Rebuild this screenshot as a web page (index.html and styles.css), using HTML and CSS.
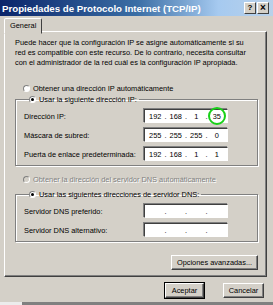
FILE: index.html
```html
<!DOCTYPE html>
<html lang="es">
<head>
    <meta charset="UTF-8"/>
    <meta name="viewport" content="width=device-width, initial-scale=1.0"/>
    <title>Propiedades de Protocolo Internet (TCP/IP)</title>
    <link rel="stylesheet" href="styles.css">
</head>
<body>
<div class="window">
    <div class="titlebar">
        <span class="title">Propiedades de Protocolo Internet (TCP/IP)</span>
        <div class="title-buttons">
            <span class="tbtn">?</span>
            <span class="tbtn close">×</span>
        </div>
    </div>

    <div class="main">
        <div class="tabs"><span class="tab">General</span></div>
        <div class="panel">
            <p class="intro">Puede hacer que la configuración IP se asigne automáticamente si su<br>
                red es compatible con este recurso. De lo contrario, necesita consultar<br>
                con el administrador de la red cuál es la configuración IP apropiada.</p>

            <!-- IP -->
            <label class="radio first"><span class="dot"></span>Obtener una dirección IP automáticamente</label>
            <fieldset class="group">
                <legend><label class="radio"><span class="dot on"></span>Usar la siguiente dirección IP:</label></legend>
                <div class="row">
                    <span class="label">Dirección IP:</span>
                    <div class="ip">
                        <span class="seg">192</span><span class="sep">.</span>
                        <span class="seg">168</span><span class="sep">.</span>
                        <span class="seg">1</span><span class="sep">.</span>
                        <span class="seg mark">35</span>
                    </div>
                </div>
                <div class="row">
                    <span class="label">Máscara de subred:</span>
                    <div class="ip">
                        <span class="seg">255</span><span class="sep">.</span>
                        <span class="seg">255</span><span class="sep">.</span>
                        <span class="seg">255</span><span class="sep">.</span>
                        <span class="seg">0</span>
                    </div>
                </div>
                <div class="row">
                    <span class="label">Puerta de enlace predeterminada:</span>
                    <div class="ip">
                        <span class="seg">192</span><span class="sep">.</span>
                        <span class="seg">168</span><span class="sep">.</span>
                        <span class="seg">1</span><span class="sep">.</span>
                        <span class="seg">1</span>
                    </div>
                </div>
            </fieldset>

            <!-- DNS -->
            <label class="radio second disabled"><span class="dot"></span>Obtener la dirección del servidor DNS automáticamente</label>
            <fieldset class="group dns">
                <legend><label class="radio"><span class="dot on"></span>Usar las siguientes direcciones de servidor DNS:</label></legend>
                <div class="row">
                    <span class="label">Servidor DNS preferido:</span>
                    <div class="ip">
                        <span class="seg"></span><span class="sep">.</span>
                        <span class="seg"></span><span class="sep">.</span>
                        <span class="seg"></span><span class="sep">.</span>
                        <span class="seg"></span>
                    </div>
                </div>
                <div class="row">
                    <span class="label">Servidor DNS alternativo:</span>
                    <div class="ip">
                        <span class="seg"></span><span class="sep">.</span>
                        <span class="seg"></span><span class="sep">.</span>
                        <span class="seg"></span><span class="sep">.</span>
                        <span class="seg"></span>
                    </div>
                </div>
            </fieldset>

            <div class="panel-actions">
                <button class="btn advanced">Opciones avanzadas...</button>
            </div>
        </div>

        <div class="dialog-actions">
            <button class="btn default">Aceptar</button>
            <button class="btn cancel">Cancelar</button>
        </div>
    </div>
    <div class="bottom"><span class="bottom-left"></span></div>
</div>
</body>
</html>
```

FILE: styles.css
```css
body {
    margin: 0;
    background-color: #d4d0c8;
    font-family: "Liberation Sans", Arial, sans-serif;
    font-size: 7.4px;
    color: #000;
}

.window {
    width: 273px;
    height: 305px;
    overflow: hidden;
    display: flex;
    flex-direction: column;
}

/* barra de titulo */
.titlebar {
    height: 16px;
    display: flex;
    align-items: center;
    justify-content: space-between;
    padding: 0 4px 0 2px;
    background: linear-gradient(to right, #0a246a 0%, #3a6ea5 50%, #a6caf0 80%, #b9d1ea 100%);
}

.title {
    color: #fff;
    font-weight: bold;
    font-size: 9.7px;
}

.title-buttons {
    display: flex;
    gap: 1px;
}

.tbtn {
    width: 10px;
    height: 10px;
    line-height: 10px;
    text-align: center;
    font-weight: bold;
    font-size: 8px;
    background-color: #d4d0c8;
    border: 1px solid;
    border-color: #fff #404040 #404040 #fff;
}

.tbtn.close {
    font-size: 10px;
}

.main {
    padding: 2px 6px 0 4px;
    flex: 1;
}

/* pestaña */
.tabs {
    display: flex;
    height: 13px;
}

.tab {
    position: relative;
    z-index: 1;
    height: 14px;
    padding: 0 5px;
    line-height: 13px;
    background-color: #d4d0c8;
    border: 1px solid;
    border-color: #fff #404040 transparent #fff;
    border-radius: 2px 2px 0 0;
}

.panel {
    height: 238px;
    padding: 6px 8px 0 10px;
    border: 1px solid;
    border-color: #fff #404040 #404040 #fff;
    box-shadow: inset -1px -1px #808080;
}

.intro {
    margin: 0;
    line-height: 10px;
    white-space: nowrap;
}

/* botones de radio */
.radio {
    display: flex;
    align-items: center;
    height: 10px;
    gap: 3px;
}

.radio.first {
    margin: 15px 0 0 8px;
}

.radio.second {
    margin: 8px 0 0 8px;
}

.radio.disabled {
    color: #808080;
    text-shadow: 1px 1px #fff;
}

.dot {
    box-sizing: border-box;
    width: 7px;
    height: 7px;
    border-radius: 50%;
    border: 1px solid;
    border-color: #808080 #fff #fff #808080;
    background-color: #fff;
    display: flex;
    align-items: center;
    justify-content: center;
}

.dot.on::after {
    content: "";
    width: 3px;
    height: 3px;
    border-radius: 50%;
    background-color: #000;
}

.radio.disabled .dot {
    background-color: #d4d0c8;
}

/* grupos */
.group {
    margin: 1px 0 0 0;
    padding: 5px 0 4px 8px;
    border: 1px solid #808080;
    box-shadow: 1px 1px #fff, inset 1px 1px #fff;
}

.group legend {
    padding: 0 2px 0 0;
    margin-left: 5px;
}

.group.dns {
    margin-top: 5px;
    padding-top: 5px;
}

.row {
    display: flex;
    align-items: center;
    height: 14px;
    margin-bottom: 5px;
}

.row:last-child {
    margin-bottom: 0;
}

.label {
    width: 120px;
}

.ip {
    position: relative;
    box-sizing: border-box;
    width: 84px;
    height: 14px;
    display: flex;
    align-items: center;
    padding: 0 2px;
    background-color: #fff;
    border: 1px solid;
    border-color: #404040 #fff #fff #404040;
    box-shadow: -1px -1px #808080, 1px 1px #d4d0c8;
}

.seg {
    width: 17px;
    text-align: center;
}

.sep {
    width: 4px;
    text-align: center;
}

/* marca verde */
.seg.mark {
    position: relative;
}

.seg.mark::after {
    content: "";
    position: absolute;
    left: 0;
    top: -5px;
    width: 14px;
    height: 14px;
    border: 2px solid #19d119;
    border-radius: 50%;
}

/* botones */
.btn {
    font-family: inherit;
    font-size: 7.4px;
    height: 15px;
    padding: 0;
    background-color: #d4d0c8;
    border: 1px solid;
    border-color: #fff #404040 #404040 #fff;
    box-shadow: inset -1px -1px #808080;
    color: #000;
}

.panel-actions {
    display: flex;
    justify-content: flex-end;
    margin-top: 13px;
}

.advanced {
    width: 87px;
}

.dialog-actions {
    display: flex;
    justify-content: flex-end;
    gap: 19px;
    margin-top: 6px;
    padding-right: 3px;
}

.default {
    width: 39px;
    outline: 1px solid #000;
}

.cancel {
    width: 41px;
}

.bottom {
    margin-top: auto;
    height: 3px;
    background-color: #808080;
}

.bottom-left {
    display: block;
    width: 22px;
    height: 3px;
    background-color: #ececec;
}
```
